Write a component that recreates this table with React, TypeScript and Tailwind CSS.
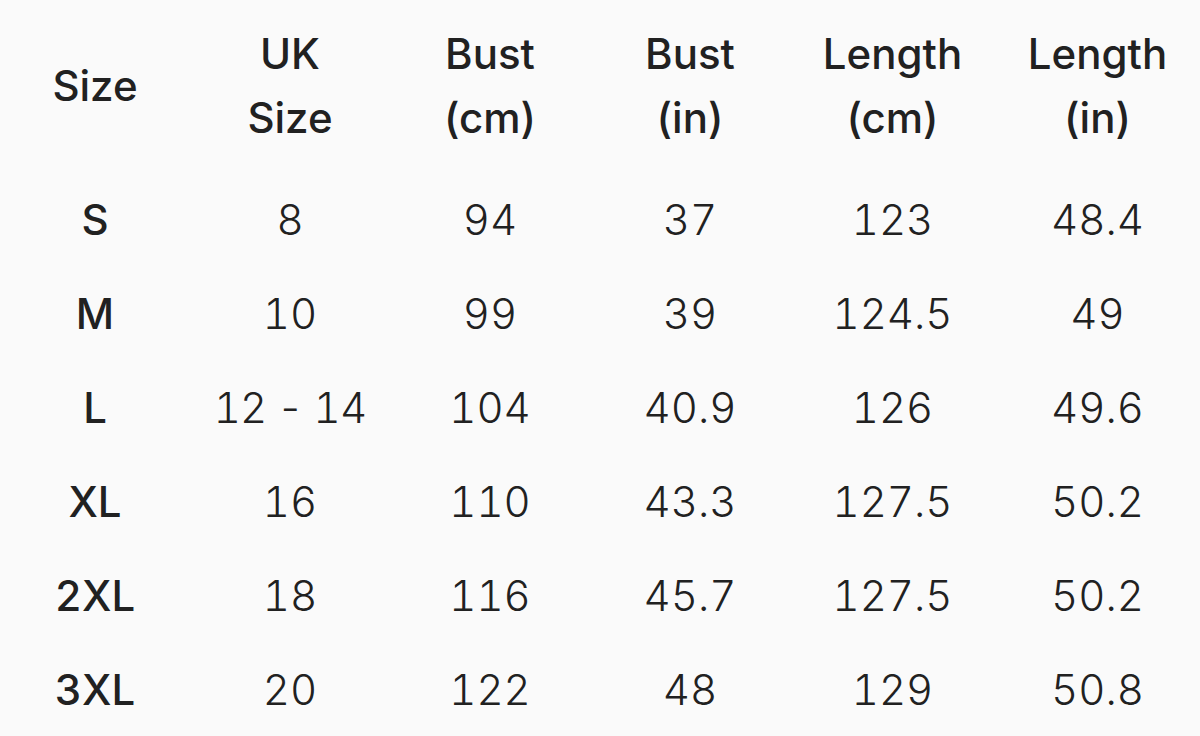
const headers: [string, string | null][] = [
  ['Size', null],
  ['UK', 'Size'],
  ['Bust', '(cm)'],
  ['Bust', '(in)'],
  ['Length', '(cm)'],
  ['Length', '(in)'],
];

const rows: string[][] = [
  ['S', '8', '94', '37', '123', '48.4'],
  ['M', '10', '99', '39', '124.5', '49'],
  ['L', '12 - 14', '104', '40.9', '126', '49.6'],
  ['XL', '16', '110', '43.3', '127.5', '50.2'],
  ['2XL', '18', '116', '45.7', '127.5', '50.2'],
  ['3XL', '20', '122', '48', '129', '50.8'],
];

export default function App() {
  return (
    <div
      className="w-[1200px] h-[736px] bg-[#fafafa] text-[#212121] overflow-hidden"
      style={{ fontFamily: 'Inter, "Open Sans", sans-serif' }}
    >
      <div className="grid grid-cols-[190px_200px_200px_200px_205px_205px]">
        {/* header */}
        {headers.map(([a, b], i) => (
          <div
            key={i}
            className="h-[172px] flex flex-col items-center justify-center text-[42px] leading-[64px] font-medium"
          >
            <span>{a}</span>
            {b && <span>{b}</span>}
          </div>
        ))}

        {/* body */}
        {rows.map((row, r) =>
          row.map((cell, c) => (
            <div
              key={`${r}-${c}`}
              className={`h-[94px] flex items-center justify-center text-[42px] tabular-nums ${
                c === 0 ? 'font-medium' : 'font-light'
              }`}
            >
              {c === 1 && cell.includes(' - ') ? (
                <span className="tracking-[-0.02em]">{cell}</span>
              ) : (
                cell
              )}
            </div>
          ))
        )}
      </div>
    </div>
  );
}
